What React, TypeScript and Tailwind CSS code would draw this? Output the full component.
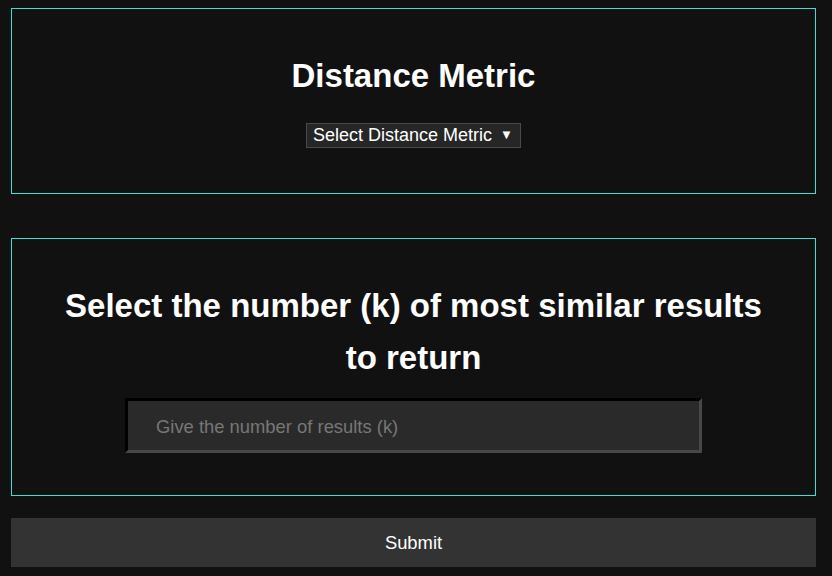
export default function App() {
  return (
    <div
      className="min-h-[576px] w-full bg-[#111111] pt-[8px]"
      style={{ fontFamily: '"Liberation Sans", Arial, sans-serif' }}
    >
      <div className="ml-[11px] w-[805px]">
        <section className="flex flex-col items-center border border-[#40e0d0] pt-[41px] pb-[45px]">
          <h1 className="text-[33px] font-bold leading-[52px] text-white">Distance Metric</h1>
          <div className="mt-[21px] flex h-[25px] w-[215px] items-center border border-[#4a4a4a] bg-[#262626] pb-[2px] pl-[6px] text-[18px] leading-none text-white">
            <span>Select Distance Metric</span>
            <span className="ml-[8px] text-[13px]">▼</span>
          </div>
        </section>

        <section className="mt-[44px] flex flex-col items-center border border-[#40e0d0] px-[40px] pt-[41px] pb-[42px]">
          <h2 className="text-center text-[33px] font-bold leading-[52px] text-white">
            Select the number (k) of most similar results to return
          </h2>
          <input
            type="text"
            placeholder="Give the number of results (k)"
            className="mt-[14px] h-[55px] w-[577px] border-[3px] border-t-black border-l-black border-b-[#484848] border-r-[#484848] bg-[#2a2a2a] pt-[2px] pl-[28px] text-[18.4px] text-white outline-none placeholder:text-[#777777]"
          />
        </section>

        <button className="mt-[22px] flex h-[49px] w-full items-center justify-center bg-[#333333] text-[18.4px] text-white">
          Submit
        </button>
      </div>
    </div>
  );
}
